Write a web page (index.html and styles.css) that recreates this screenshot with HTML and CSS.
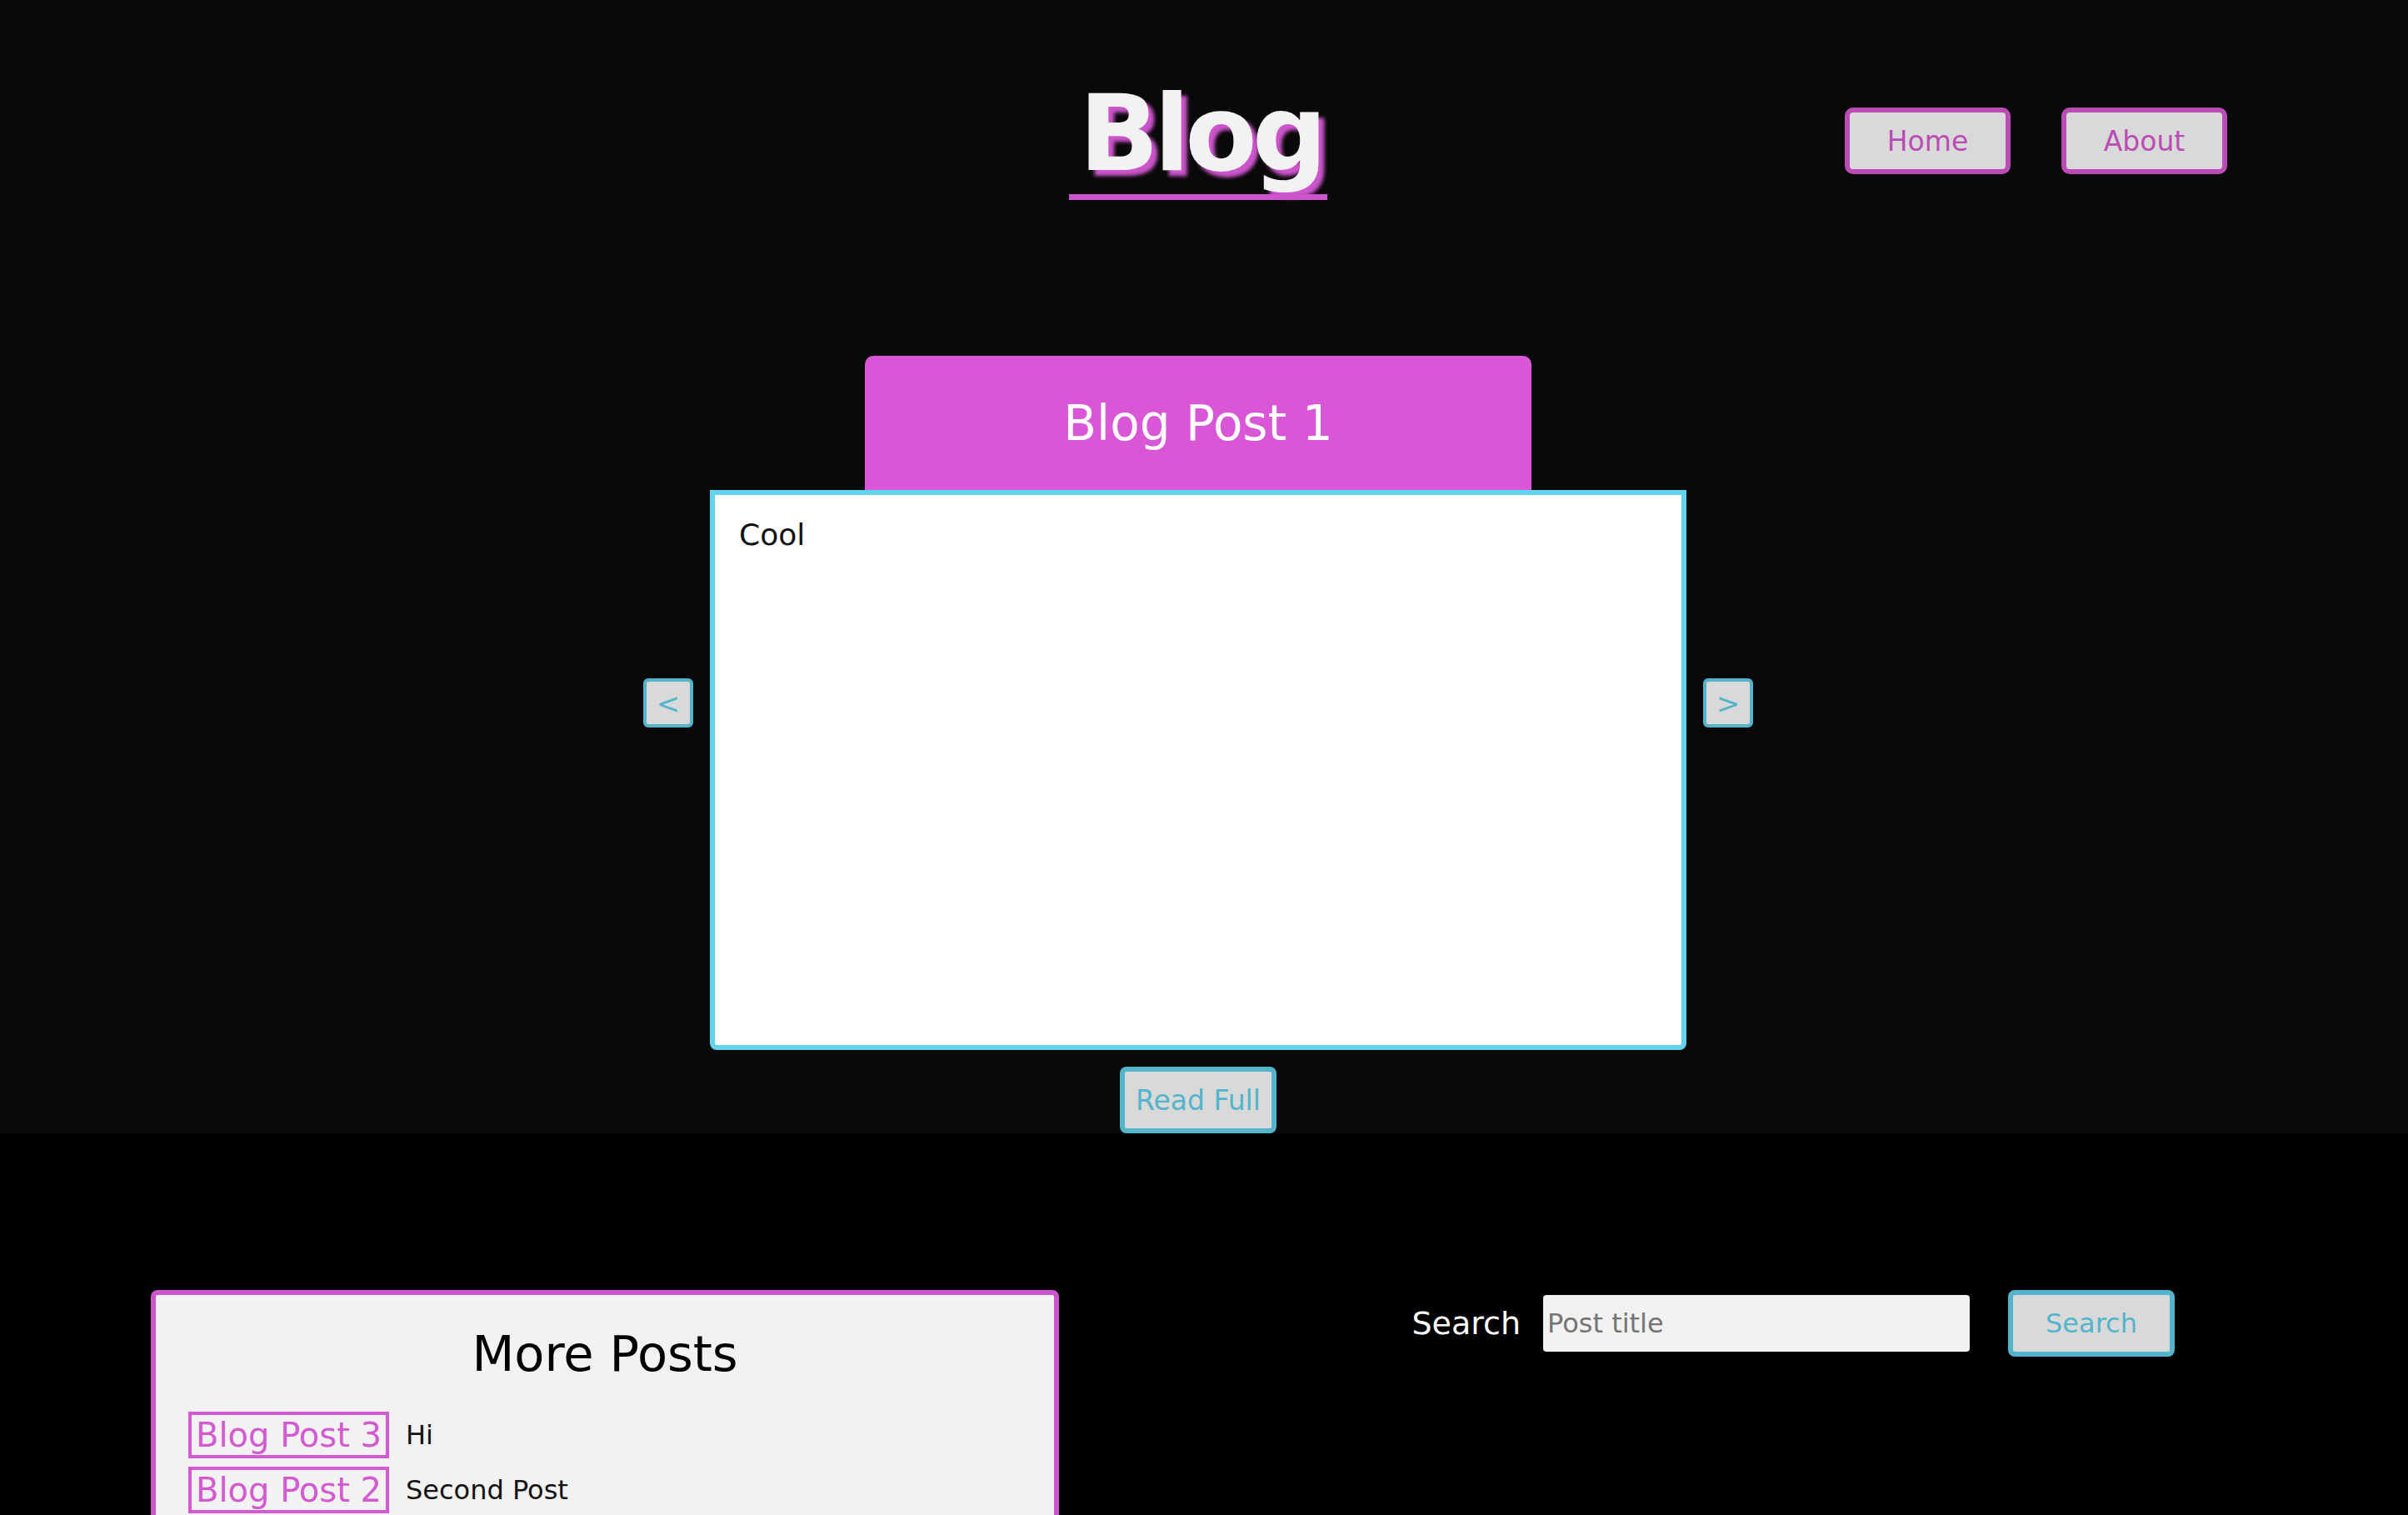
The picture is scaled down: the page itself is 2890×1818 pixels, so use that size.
FILE: index.html
```html
<!DOCTYPE html>
<html lang="en">
<head>
<meta charset="utf-8">
<title>Blog</title>
<link rel="stylesheet" href="styles.css">
</head>
<body>
<section class="top">
  <header class="header">
    <div class="header-spacer"></div>
    <h1 class="site-title">Blog</h1>
    <nav class="nav">
      <a class="nav-btn" href="#">Home</a>
      <a class="nav-btn" href="#">About</a>
    </nav>
  </header>
  <main class="main">
    <div class="carousel">
      <button class="arrow">&lt;</button>
      <div class="post">
        <div class="post-tab">Blog Post 1</div>
        <div class="post-body">Cool</div>
      </div>
      <button class="arrow">&gt;</button>
    </div>
    <button class="read-full">Read Full</button>
  </main>
</section>
<section class="bottom">
  <div class="more">
    <h2 class="more-title">More Posts</h2>
    <ul class="more-list">
      <li class="more-item"><a class="more-link" href="#">Blog Post 3</a><span class="more-desc">Hi</span></li>
      <li class="more-item"><a class="more-link" href="#">Blog Post 2</a><span class="more-desc">Second Post</span></li>
    </ul>
  </div>
  <form class="search">
    <label class="search-label" for="q">Search</label>
    <input class="search-input" id="q" type="text" placeholder="Post title">
    <button class="search-btn" type="button">Search</button>
  </form>
</section>
</body>
</html>
```
FILE: styles.css
```css
* { box-sizing: border-box; }
html, body { margin: 0; padding: 0; }
body {
  background: #000;
  font-family: "DejaVu Sans", "Liberation Sans", sans-serif;
  width: 2890px;
  height: 1818px;
  overflow: hidden;
}
.top {
  background: #090909;
  height: 1360px;
  padding-right: 14px;
}
.header {
  display: grid;
  grid-template-columns: 1fr auto 1fr;
  align-items: center;
  padding-top: 98px;
}
.site-title {
  margin: 0;
  font-size: 126px;
  line-height: 126px;
  font-weight: bold;
  letter-spacing: -6px;
  color: #f2f2f2;
  text-shadow: 7px 7px 4px #cc55cc;
  padding: 0 6px 9px 12px;
  border-bottom: 7px solid #cc55cc;
}
.nav {
  justify-self: end;
  display: flex;
  gap: 61px;
  margin-right: 203px;
}
.nav-btn {
  width: 199px;
  height: 80px;
  display: flex;
  align-items: center;
  justify-content: center;
  background: #d9d9d9;
  border: 6px solid #bb4bb5;
  border-radius: 10px;
  color: #bb4bb5;
  font-size: 33px;
  text-decoration: none;
}
.main {
  display: flex;
  flex-direction: column;
  align-items: center;
  margin-top: 187px;
}
.carousel {
  display: flex;
  align-items: center;
  gap: 20px;
}
.arrow {
  width: 60px;
  height: 59px;
  padding: 0;
  background: #d9d9d9;
  border: 4px solid #52b5cc;
  border-radius: 6px;
  color: #52b5cc;
  font-family: "DejaVu Sans", sans-serif;
  font-size: 34px;
  line-height: 1;
  display: flex;
  align-items: center;
  justify-content: center;
}
.post {
  width: 1172px;
  display: flex;
  flex-direction: column;
  align-items: center;
}
.post-tab {
  width: 800px;
  height: 161px;
  background: #d957d7;
  border-radius: 10px 10px 0 0;
  color: #fff;
  font-size: 58px;
  display: flex;
  align-items: center;
  justify-content: center;
}
.post-body {
  width: 1172px;
  height: 672px;
  background: #fff;
  border: 6px solid #5fd4ec;
  border-radius: 0 0 8px 8px;
  padding: 27px 29px;
  font-size: 36px;
  line-height: 42px;
  color: #111;
}
.read-full {
  margin-top: 20px;
  width: 188px;
  height: 80px;
  padding: 0;
  background: #d9d9d9;
  border: 6px solid #52b5cc;
  border-radius: 8px;
  color: #52b5cc;
  font-family: "DejaVu Sans", sans-serif;
  font-size: 33px;
}
.bottom {
  display: flex;
  justify-content: space-between;
  align-items: flex-start;
  padding: 188px 280px 0 181px;
  height: 458px;
}
.more {
  width: 1090px;
  height: 400px;
  background: #f2f2f2;
  border: 6px solid #cf55cc;
  border-radius: 8px;
  padding: 41px 39px 0;
}
.more-title {
  margin: 0;
  text-align: center;
  font-weight: normal;
  font-size: 59px;
  line-height: 59px;
  color: #000;
}
.more-list {
  list-style: none;
  margin: 40px 0 0;
  padding: 0;
  display: flex;
  flex-direction: column;
  gap: 10px;
}
.more-item {
  display: flex;
  align-items: center;
  gap: 20px;
}
.more-link {
  height: 56px;
  border: 4px solid #d35ad0;
  padding: 0 5px;
  color: #d35ad0;
  font-size: 40px;
  line-height: 48px;
  text-decoration: none;
}
.more-desc {
  font-size: 32px;
  color: #111;
}
.search {
  display: flex;
  align-items: center;
  margin: 0;
}
.search-label {
  color: #fff;
  font-size: 38px;
  margin-right: 27px;
}
.search-input {
  width: 512px;
  height: 68px;
  border: none;
  border-radius: 4px;
  background: #f2f2f2;
  padding: 0 5px;
  font-family: "DejaVu Sans", sans-serif;
  font-size: 32px;
  color: #333;
  margin-right: 46px;
}
.search-input::placeholder { color: #757575; }
.search-btn {
  width: 200px;
  height: 80px;
  padding: 0;
  background: #d9d9d9;
  border: 6px solid #52b5cc;
  border-radius: 8px;
  color: #52b5cc;
  font-family: "DejaVu Sans", sans-serif;
  font-size: 32px;
}
```
